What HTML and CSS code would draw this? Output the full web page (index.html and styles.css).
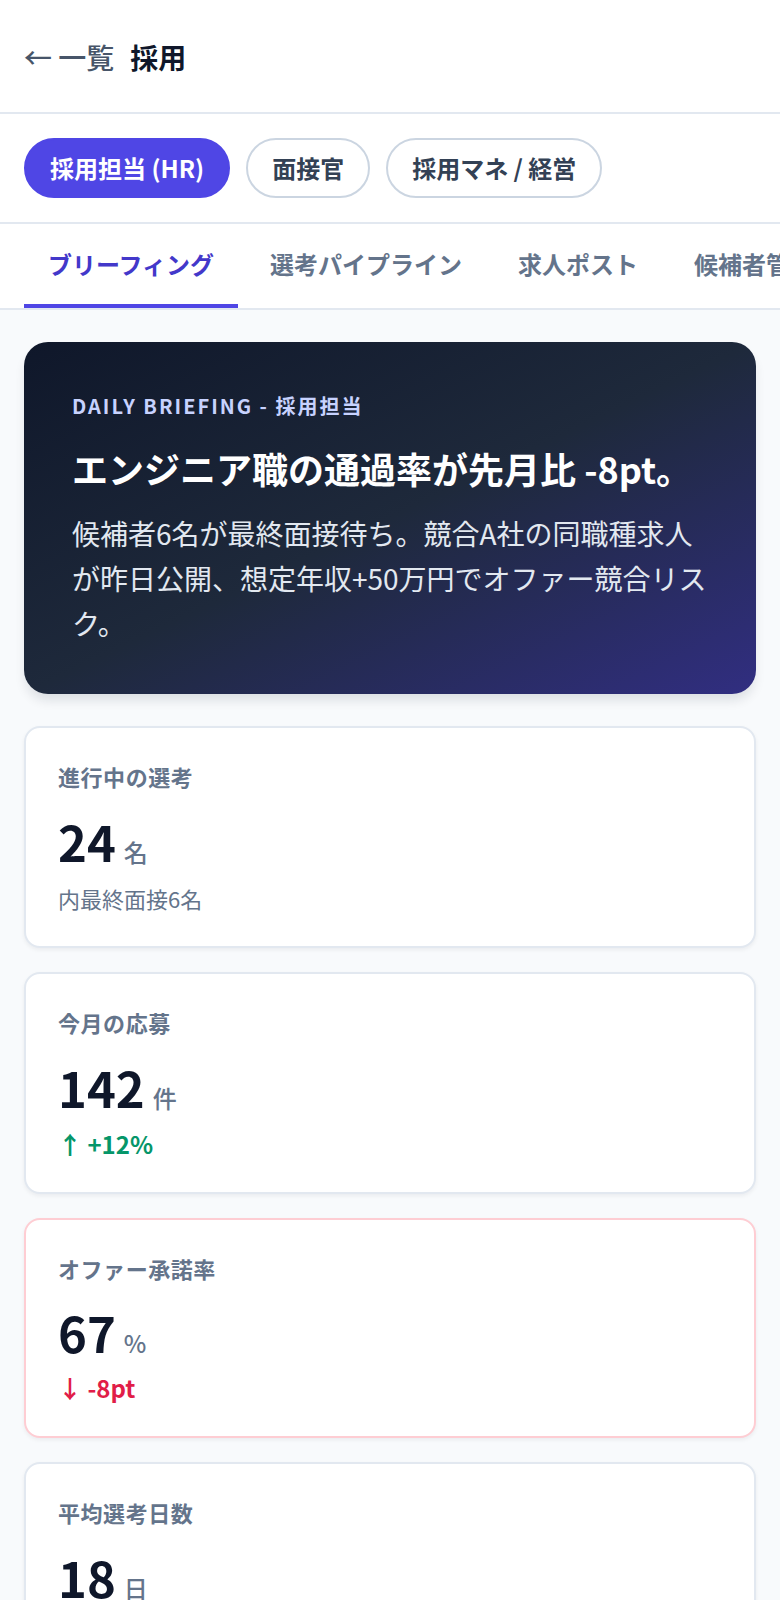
FILE: index.html
```html
<!DOCTYPE html>
<html lang="ja">
<head>
    <meta charset="UTF-8">
    <meta name="viewport" content="width=device-width, initial-scale=1">
    <title>採用</title>
    <link rel="stylesheet" href="styles.css">
</head>
<body>
<header class="header">
    <a class="back" href="#">← 一覧</a>
    <h1>採用</h1>
</header>
<div class="roles">
    <button class="role active" type="button">採用担当 (HR)</button>
    <button class="role" type="button">面接官</button>
    <button class="role" type="button">採用マネ / 経営</button>
</div>
<nav class="tabs">
    <a class="tab active" href="#">ブリーフィング</a>
    <a class="tab" href="#">選考パイプライン</a>
    <a class="tab" href="#">求人ポスト</a>
    <a class="tab" href="#">候補者管理</a>
</nav>
<main class="main">
    <section class="briefing">
        <p class="eyebrow">DAILY BRIEFING - 採用担当</p>
        <h2>エンジニア職の通過率が先月比 -8pt。</h2>
        <p class="text">候補者6名が最終面接待ち。競合A社の同職種求人が昨日公開、想定年収+50万円でオファー競合リスク。</p>
    </section>
    <section class="stats">
        <div class="card">
            <h3>進行中の選考</h3>
            <p class="value">24<span class="unit">名</span></p>
            <p class="note">内最終面接6名</p>
        </div>
        <div class="card">
            <h3>今月の応募</h3>
            <p class="value">142<span class="unit">件</span></p>
            <p class="trend up">↑ +12%</p>
        </div>
        <div class="card alert">
            <h3>オファー承諾率</h3>
            <p class="value">67<span class="unit">%</span></p>
            <p class="trend down">↓ -8pt</p>
        </div>
        <div class="card">
            <h3>平均選考日数</h3>
            <p class="value">18<span class="unit">日</span></p>
            <p class="note">目標 21日</p>
        </div>
    </section>
</main>
</body>
</html>
```
FILE: styles.css
```css
* {
    padding: 0;
    margin: 0;
    box-sizing: border-box;
}

body {
    font-family: "Noto Sans CJK JP", sans-serif;
    font-size: 28px;
    color: #0f172a;
    background: #f8fafc;
    overflow-x: hidden;
}

a {
    text-decoration: none;
}

/* header */
.header {
    display: flex;
    align-items: center;
    gap: 16px;
    padding: 36px 24px 34px;
    background: #fff;
    border-bottom: 2px solid #e2e8f0;
}

.header h1,
.back {
    font-size: 28px;
    line-height: 42px;
}

.back {
    font-weight: 500;
    color: #475569;
}

/* role switch */
.roles {
    display: flex;
    gap: 16px;
    padding: 24px;
    background: #fff;
    border-bottom: 2px solid #e2e8f0;
    overflow: hidden;
}

.role {
    flex-shrink: 0;
    padding: 12px 24px;
    font-family: inherit;
    font-size: 24px;
    font-weight: 700;
    line-height: 32px;
    color: #334155;
    background: #fff;
    border: 2px solid #cbd5e1;
    border-radius: 30px;
    cursor: pointer;
}

.role.active {
    color: #fff;
    background: #4f46e5;
    border-color: #4f46e5;
}

/* tabs */
.tabs {
    display: flex;
    gap: 8px;
    padding: 0 24px;
    background: #fff;
    border-bottom: 2px solid #e2e8f0;
    overflow: hidden;
}

.tab {
    flex-shrink: 0;
    padding: 20px 24px;
    font-size: 24px;
    font-weight: 700;
    line-height: 40px;
    color: #64748b;
    white-space: nowrap;
    border-bottom: 4px solid transparent;
}

.tab.active {
    color: #4338ca;
    border-color: #4f46e5;
}

.main {
    padding: 32px 24px;
}

/* briefing */
.briefing {
    margin-bottom: 32px;
    padding: 48px;
    color: #fff;
    background: linear-gradient(to bottom right, #0f172a 0%, #1e293b 50%, #312e81 100%);
    border-radius: 24px;
    box-shadow: 0 8px 12px -2px rgba(15, 23, 42, 0.12);
}

.eyebrow {
    margin-bottom: 16px;
    font-size: 20px;
    font-weight: 700;
    line-height: 32px;
    letter-spacing: 2px;
    color: #c7d2fe;
}

.briefing h2 {
    margin-bottom: 12px;
    font-size: 36px;
    line-height: 61px;
}

.text {
    line-height: 45px;
    color: #e2e8f0;
}

/* stat cards */
.stats {
    display: grid;
    gap: 24px;
}

.card {
    padding: 32px;
    background: #fff;
    border: 2px solid #e2e8f0;
    border-radius: 16px;
    box-shadow: 0 2px 4px rgba(15, 23, 42, 0.06);
}

.card.alert {
    border-color: #fecdd3;
}

.card h3 {
    margin-bottom: 8px;
    font-size: 22px;
    line-height: 32px;
    letter-spacing: 0.025em;
    color: #64748b;
}

.value {
    font-size: 49px;
    font-weight: 700;
    line-height: 82px;
}

.alert .value {
    line-height: 80px;
}

.unit {
    margin-left: 8px;
    font-size: 24px;
    font-weight: 500;
    line-height: 24px;
    color: #64748b;
}

.note {
    font-size: 22px;
    line-height: 32px;
    color: #64748b;
}

.trend {
    font-size: 24px;
    font-weight: 700;
    line-height: 32px;
}

.up {
    color: #059669;
}

.down {
    color: #e11d48;
}
```
